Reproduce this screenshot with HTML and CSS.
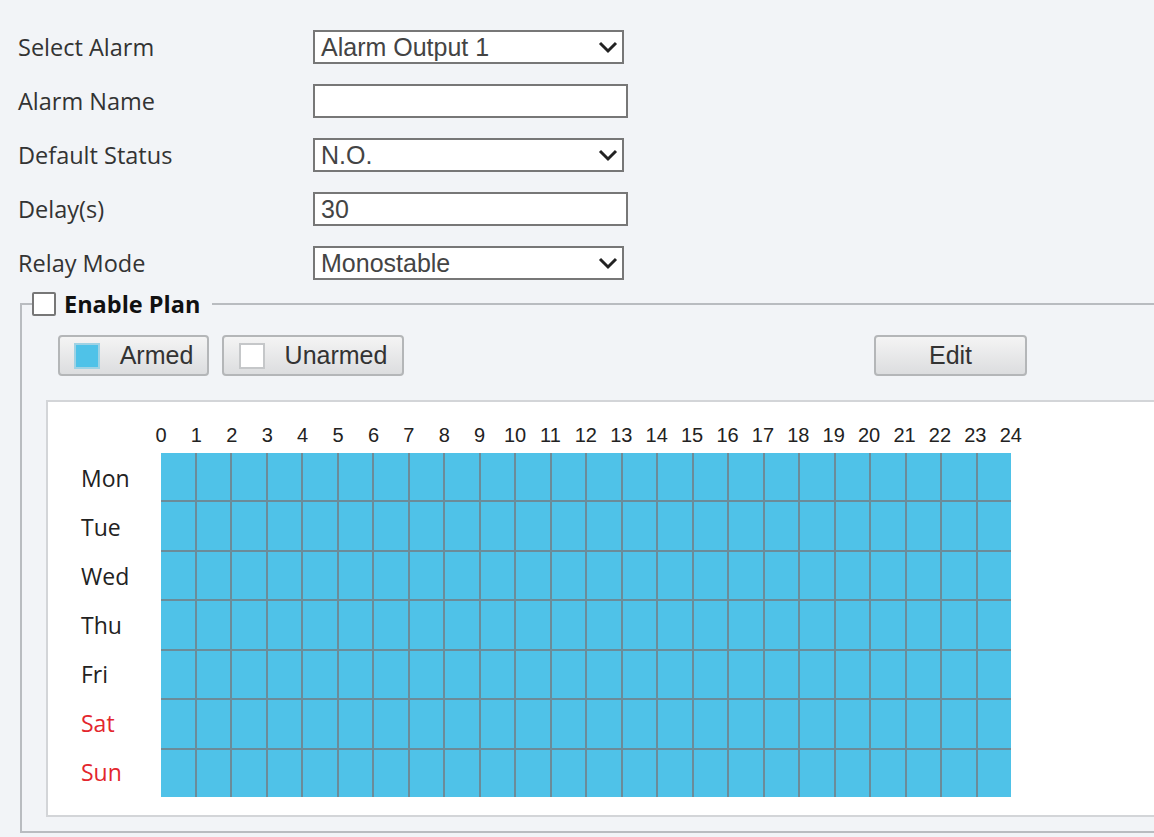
FILE: index.html
```html
<!DOCTYPE html>
<html lang="en">
<head>
  <meta charset="UTF-8">
  <meta name="viewport" content="width=device-width, initial-scale=1.0">
  <title>Alarm Output</title>
  <link rel="stylesheet" href="styles.css">
</head>
<body>

  <div class="alarm-form">
    <div class="form-row">
      <label>Select Alarm</label>
      <div class="select">Alarm Output 1
        <svg class="chevron" width="20" height="13" viewBox="0 0 20 13"><path d="M2 2 L10 10 L18 2" fill="none" stroke="#222" stroke-width="3"/></svg>
      </div>
    </div>
    <div class="form-row">
      <label>Alarm Name</label>
      <input type="text" class="text-input" value="">
    </div>
    <div class="form-row">
      <label>Default Status</label>
      <div class="select">N.O.
        <svg class="chevron" width="20" height="13" viewBox="0 0 20 13"><path d="M2 2 L10 10 L18 2" fill="none" stroke="#222" stroke-width="3"/></svg>
      </div>
    </div>
    <div class="form-row">
      <label>Delay(s)</label>
      <input type="text" class="text-input" value="30">
    </div>
    <div class="form-row">
      <label>Relay Mode</label>
      <div class="select">Monostable
        <svg class="chevron" width="20" height="13" viewBox="0 0 20 13"><path d="M2 2 L10 10 L18 2" fill="none" stroke="#222" stroke-width="3"/></svg>
      </div>
    </div>
  </div>

  <fieldset class="plan">
    <legend><span class="checkbox"></span>Enable Plan</legend>
    <div class="plan-body">
      <div class="toolbar">
        <button class="btn btn-armed"><span class="swatch armed"></span>Armed</button>
        <button class="btn btn-unarmed"><span class="swatch"></span>Unarmed</button>
        <button class="btn btn-edit">Edit</button>
      </div>

      <div class="schedule">
        <div class="hours">
          <span>0</span><span>1</span><span>2</span><span>3</span><span>4</span>
          <span>5</span><span>6</span><span>7</span><span>8</span><span>9</span>
          <span>10</span><span>11</span><span>12</span><span>13</span><span>14</span>
          <span>15</span><span>16</span><span>17</span><span>18</span><span>19</span>
          <span>20</span><span>21</span><span>22</span><span>23</span><span>24</span>
        </div>
        <div class="week">
          <div class="days">
            <span>Mon</span>
            <span>Tue</span>
            <span>Wed</span>
            <span>Thu</span>
            <span>Fri</span>
            <span class="weekend">Sat</span>
            <span class="weekend">Sun</span>
          </div>
          <div class="grid" id="grid"></div>
        </div>
      </div>
    </div>
  </fieldset>

<script>
  // build the 7 x 24 armed cells
  const grid = document.getElementById('grid');
  for (let i = 0; i < 7 * 24; i++) {
    const cell = document.createElement('div');
    cell.className = 'cell armed';
    grid.appendChild(cell);
  }
</script>

</body>
</html>
```

FILE: styles.css
```css
body {
  margin: 0;
  padding: 0;
  background-color: #f2f4f7;
  font-family: "Open Sans", sans-serif;
  color: #333;
  overflow: hidden;
  width: 1154px;
  height: 837px;
}

.alarm-form {
  padding: 20px 0 0 18px;
}

.form-row {
  display: flex;
  align-items: center;
  height: 54px;
}

.form-row label {
  width: 295px;
  font-size: 23.5px;
  color: #333;
}

.select,
.text-input {
  box-sizing: border-box;
  height: 34px;
  border: 2px solid #777;
  background: #fff;
  font-family: "Liberation Sans", Arial, sans-serif;
  font-size: 25px;
  color: #444;
  padding: 0 6px;
}

.select {
  width: 311px;
  display: flex;
  align-items: center;
  justify-content: space-between;
}

.select .chevron {
  margin-right: -2px;
}

.text-input {
  width: 315px;
  outline: none;
}

/* plan */
.plan {
  margin: -2px 0 0 20px;
  padding: 0 0 14px 0;
  width: 1180px;
  border: 2px solid #b9bcc0;
  min-width: 0;
}

.plan legend {
  display: flex;
  align-items: center;
  margin-left: 10px;
  padding: 0 12px 0 0;
  font-size: 23.5px;
  font-weight: bold;
  color: #111;
}

.checkbox {
  display: inline-block;
  width: 24px;
  height: 24px;
  box-sizing: border-box;
  border: 2px solid #777;
  border-radius: 2px;
  background: #fff;
  margin-right: 8px;
}

.plan-body {
  padding-left: 24px;
}

.toolbar {
  display: flex;
  padding-left: 12px;
  margin-top: 15px;
}

.btn {
  box-sizing: border-box;
  height: 41px;
  display: flex;
  align-items: center;
  justify-content: center;
  gap: 20px;
  border: 2px solid #b4b6b8;
  border-radius: 4px;
  background: linear-gradient(#f4f4f4, #dcdddf);
  font-family: "Liberation Sans", Arial, sans-serif;
  font-size: 25px;
  color: #333;
  padding: 0;
}

.btn-armed {
  width: 151px;
}

.btn-unarmed {
  width: 182px;
  margin-left: 13px;
}

.btn-edit {
  width: 153px;
  margin-left: 470px;
}

.swatch {
  display: inline-block;
  width: 26px;
  height: 26px;
  box-sizing: border-box;
  border: 2px solid #c5c7c9;
  background: #fff;
}

.swatch.armed {
  background: #4fc2e8;
  border-color: #9fd2e4;
}

.schedule {
  margin-top: 24px;
  border: 2px solid #d3d5d8;
  background: #fff;
  padding: 22px 0 18px 0;
}

.hours {
  display: grid;
  grid-template-columns: repeat(25, 35.4167px);
  padding-left: 95.3px;
  height: 29px;
  font-family: "Liberation Sans", Arial, sans-serif;
  font-size: 20px;
  line-height: 22px;
  color: #222;
}

.hours span {
  text-align: center;
}

.week {
  display: flex;
  padding-left: 33px;
}

.days {
  width: 80px;
  height: 344px;
  display: grid;
  grid-template-rows: repeat(7, 1fr);
  align-items: center;
  font-size: 23px;
  color: #222;
}

.days .weekend {
  color: #e3262d;
}

.grid {
  width: 850px;
  height: 344px;
  display: grid;
  grid-template-columns: repeat(24, 1fr);
  grid-template-rows: repeat(7, 1fr);
  gap: 2px;
  background: #6b8c99;
}

.cell.armed {
  background: #4fc2e8;
}
```
